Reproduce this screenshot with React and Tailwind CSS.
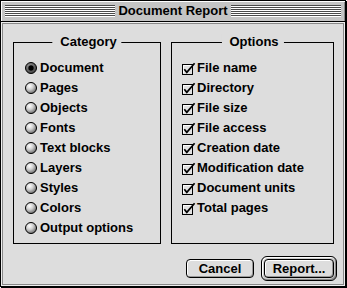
import React from "react";

const FONT = "[font-family:'Liberation_Sans',Arial,sans-serif]";

function Radio({ checked }) {
  return (
    <svg width="12" height="12" viewBox="0 0 12 12" className="shrink-0">
      <defs>
        <radialGradient id="rgOff" cx="38%" cy="32%" r="70%">
          <stop offset="0" stopColor="#ffffff" />
          <stop offset="0.45" stopColor="#d0d0d0" />
          <stop offset="1" stopColor="#6a6a6a" />
        </radialGradient>
        <radialGradient id="rgOn" cx="40%" cy="35%" r="70%">
          <stop offset="0" stopColor="#9a9a9a" />
          <stop offset="1" stopColor="#3a3a3a" />
        </radialGradient>
      </defs>
      <circle cx="6" cy="6" r="5.5" fill={checked ? "url(#rgOn)" : "url(#rgOff)"} stroke="#000" />
      {checked && <circle cx="6" cy="6" r="2.7" fill="#000" />}
    </svg>
  );
}

function Check() {
  return (
    <svg width="14" height="13" viewBox="0 0 14 13" className="shrink-0">
      <rect x="0.5" y="2.5" width="10" height="10" fill="#e2e2e2" stroke="#000" />
      <path d="M1.5 11 V3.5 H9.5" stroke="#ffffff" fill="none" />
      <path d="M2.3 7.2 L4.8 10.3 L12.6 1.2" stroke="#000" strokeWidth="1.7" fill="none" />
    </svg>
  );
}

function Stripes() {
  return (
    <div className="flex-1 flex flex-col">
      {[0, 1, 2, 3, 4, 5].map((i) => (
        <div key={i} className="h-[2px] border-t border-t-[#4a4a4a] border-b border-b-white" />
      ))}
    </div>
  );
}

function GroupBox({ title, width, children, padLeft }) {
  return (
    <div className={`relative h-[202px] border border-black ${width}`}>
      <div className="absolute left-1/2 -top-[9px] -translate-x-1/2 pl-[8px] pr-[5px] bg-[#dddddd] text-[13px] leading-[16px] font-bold whitespace-nowrap">
        {title}
      </div>
      <div className={`flex flex-col pt-[15px] ${padLeft}`}>{children}</div>
    </div>
  );
}

const categories = [
  "Document",
  "Pages",
  "Objects",
  "Fonts",
  "Text blocks",
  "Layers",
  "Styles",
  "Colors",
  "Output options",
];

const options = [
  "File name",
  "Directory",
  "File size",
  "File access",
  "Creation date",
  "Modification date",
  "Document units",
  "Total pages",
];

export default function App() {
  return (
    <div className={`w-[347px] h-[288px] bg-white text-black ${FONT}`}>
      <div className="w-[346px] h-[287px] border border-black shadow-[1px_1px_0_#000] flex flex-col bg-[#eeeeee]">
        <div className="h-[21px] shrink-0 border-b border-black bg-[#c4c4c4] flex items-center px-[4px] shadow-[inset_1px_1px_0_#ffffff,inset_-1px_0_0_#888888]">
          <Stripes />
          <div className="px-[3px] text-[13px] leading-[16px] font-bold whitespace-nowrap">Document Report</div>
          <Stripes />
        </div>
        <div className="flex-1 p-px">
          <div className="h-full border border-[#888888] bg-[#dddddd] flex flex-col pl-[10px] pt-[18px] pr-[6px]">
            <div className="flex gap-[10px]">
              <GroupBox title="Category" width="w-[148px]" padLeft="pl-[11px]">
                {categories.map((c, i) => (
                  <div key={c} className="h-[20px] flex items-center gap-[3px]">
                    <Radio checked={i === 0} />
                    <span className="text-[13px] leading-[16px] font-bold whitespace-nowrap">{c}</span>
                  </div>
                ))}
              </GroupBox>
              <GroupBox title="Options" width="w-[163px]" padLeft="pl-[10px]">
                {options.map((o) => (
                  <div key={o} className="h-[20px] flex items-center gap-[1px]">
                    <Check />
                    <span className="text-[13px] leading-[16px] font-bold whitespace-nowrap">{o}</span>
                  </div>
                ))}
              </GroupBox>
            </div>
            <div className="mt-[12px] flex justify-end items-center gap-[7px]">
              <button className="w-[68px] h-[19px] rounded-[4px] border border-black bg-[#dddddd] shadow-[inset_1px_1px_0_#ffffff,inset_-1px_-1px_0_#999999] text-[13px] leading-[16px] font-bold flex items-center justify-center">
                Cancel
              </button>
              <div className="rounded-[6px] border border-black bg-[#cccccc] p-[2px] shadow-[inset_1px_1px_0_#ffffff,inset_-1px_-1px_0_#888888]">
                <button className="w-[70px] h-[19px] rounded-[4px] border border-black bg-[#dddddd] shadow-[inset_1px_1px_0_#ffffff,inset_-1px_-1px_0_#999999] text-[13px] leading-[16px] font-bold flex items-center justify-center">
                  Report...
                </button>
              </div>
            </div>
          </div>
        </div>
      </div>
    </div>
  );
}
